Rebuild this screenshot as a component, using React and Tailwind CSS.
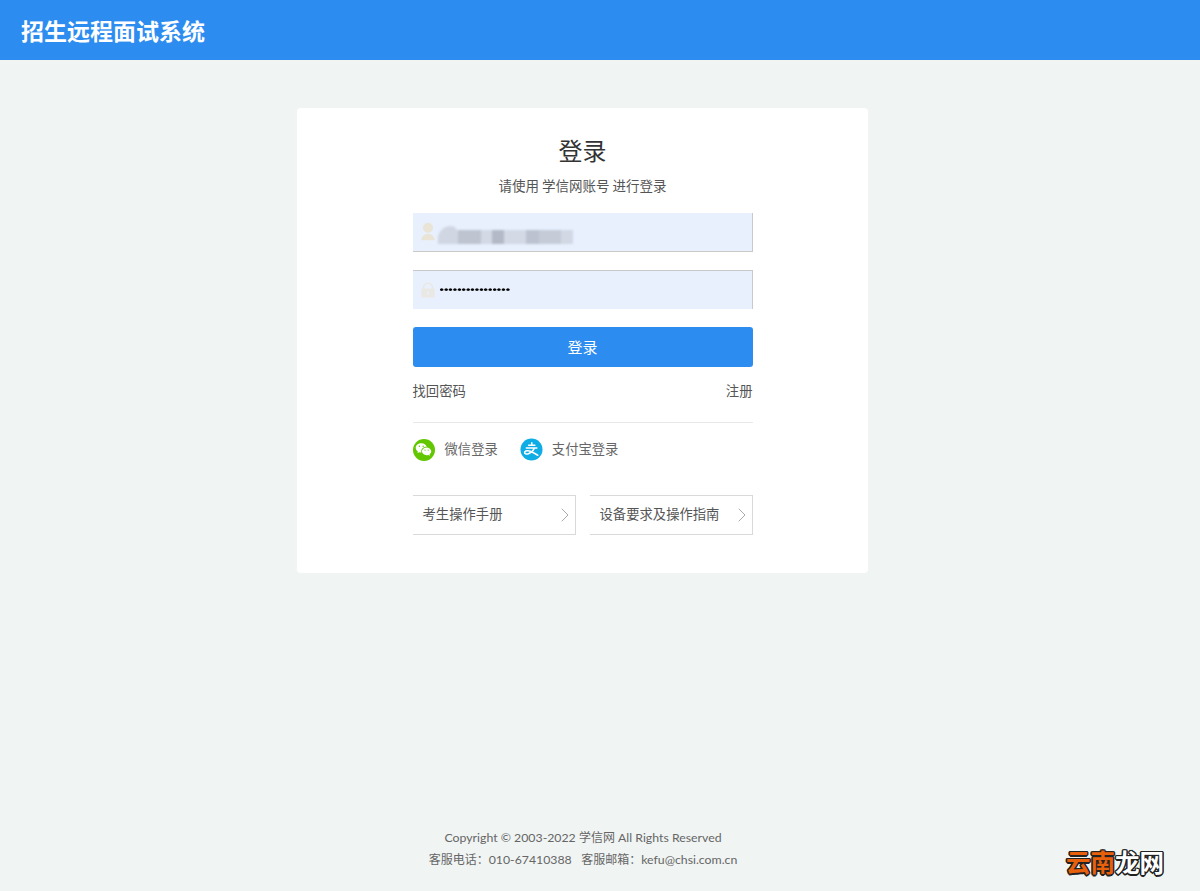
import { RiUserFill, RiLockFill, RiWechatFill } from 'react-icons/ri'
import { ChevronRight } from 'lucide-react'

function AlipayMark() {
  return (
    <svg viewBox="0 0 24 24" className="w-[23px] h-[23px]">
      <circle cx="12" cy="12" r="11.5" fill="#0fade6" />
      <path d="M9 7.6h6.5M12.3 5v2.6M6.6 10.400h11M15 10.600c-1.400 2.900-3.800 5.200-6.800 6-1.900.5-3.400-.1-3.400-1.400 0-1.500 2-2.300 4-1.800 3.200.7 6.400 2.600 9.700 4.600" fill="none" stroke="#fff" strokeWidth="1.6" strokeLinecap="round" />
    </svg>
  )
}

function GuideLink({ text }) {
  return (
    <a className="w-[163px] h-10 flex items-center justify-between pl-[10px] border-y border-r border-[#d9d9d9] text-[13.33px] text-[#555]">
      <span className="pb-[2px]">{text}</span>
      <ChevronRight size={24} strokeWidth={1} className="text-[#aaa] -mr-[2px]" />
    </a>
  )
}

export default function App() {
  return (
    <div className="relative min-h-screen flex flex-col bg-[#f0f4f3] font-['Noto_Sans_CJK_SC','Noto_Sans',sans-serif]">
      <header className="h-[60px] bg-[#2d8cf0] flex items-center px-[21px]">
        <h1 className="text-[23px] font-bold text-white">招生远程面试系统</h1>
      </header>

      <main className="flex-1 flex flex-col">
        <div className="w-[571px] ml-[297px] mt-12 h-[465px] bg-white rounded flex flex-col items-center pt-[26px]">
          <h2 className="text-[24px] leading-8 text-[#333]">登录</h2>
          <p className="mt-[9px] text-[13.5px] leading-5 text-[#555]">请使用 学信网账号 进行登录</p>

          <div className="w-[340px] mt-[18px]">
            {/* Username */}
            <div className="h-[39px] bg-[#e8f0fe] border-b border-r border-[#c9c9c9] flex items-center pl-[5px]">
              <RiUserFill size={20} className="shrink-0 text-[#e9e4d6]" />
              <div className="mt-[5px] flex items-end h-[18px] blur-[1px]">
                <div className="w-5 h-[18px] rounded-tl-[14px] rounded-tr-[8px] bg-[#d0d6e2]" />
                <div className="w-[23px] h-[14px] bg-[#bec4d0]" />
                <div className="w-[11px] h-[14px] bg-[#d3d9e5]" />
                <div className="w-[12px] h-[14px] bg-[#b3b9c6]" />
                <div className="w-[22px] h-[14px] bg-[#d3d9e5]" />
                <div className="w-[13px] h-[14px] bg-[#bcc2cf]" />
                <div className="w-[22px] h-[14px] bg-[#c5cbd7]" />
                <div className="w-[12px] h-[14px] bg-[#d2d8e4]" />
              </div>
            </div>

            {/* Password */}
            <div className="mt-[18px] h-[39px] bg-[#e8f0fe] border-t border-r border-[#c9c9c9] flex items-center pl-[6px]">
              <RiLockFill size={18} className="text-[#e9e8e4]" />
              <span className="ml-[3px] inline-block scale-y-75 font-['Liberation_Sans',sans-serif] text-[12.6px] leading-none font-bold text-black">••••••••••••••••</span>
            </div>

            <button className="mt-[18px] w-full h-10 pt-px rounded-[3px] bg-[#2d8cf0] text-white text-[15px]">登录</button>

            <div className="mt-[14px] flex justify-between text-[13.33px] leading-[20px] text-[#555]">
              <a>找回密码</a>
              <a>注册</a>
            </div>

            <div className="mt-[21px] border-t border-[#e8e8e8] pt-[15px] flex items-center text-[13.33px] text-[#666]">
              <span className="w-[22px] h-[22px] rounded-full bg-[#62c700] flex items-center justify-center">
                <RiWechatFill size={17} className="text-white" />
              </span>
              <span className="ml-[10px] pb-[2px]">微信登录</span>
              <span className="ml-[22px]"><AlipayMark /></span>
              <span className="ml-[9px] pb-[2px]">支付宝登录</span>
            </div>

            <div className="mt-[34px] flex justify-between">
              <GuideLink text="考生操作手册" />
              <GuideLink text="设备要求及操作指南" />
            </div>
          </div>
        </div>
      </main>

      <footer className="pb-[21px] flex flex-col items-center gap-[2px] font-['Lato','Noto_Sans_CJK_SC',sans-serif] text-[12.300px] leading-5 text-[#666] pr-[34px]">
        <p>Copyright © 2003-2022 <span className="text-[12px]">学信网</span> All Rights Reserved</p>
        <p><span className="text-[12px]">客服电话：</span>010-67410388&nbsp;&nbsp;&nbsp;<span className="text-[12px]">客服邮箱：</span>kefu@chsi.com.cn</p>
      </footer>

      {/* site watermark stamped over the page */}
      <div className="absolute left-[1066px] top-[847px] text-[24.5px] leading-[30px] font-bold text-white whitespace-nowrap [text-shadow:-1.5px_0_0_#222,1.5px_0_0_#222,0_-1.5px_0_#222,0_1.5px_0_#222,-1px_-1px_0_#222,1px_1px_0_#222,-1px_1px_0_#222,1px_-1px_0_#222]">
        <span className="text-[#e8600c]">云南</span>龙网
      </div>
    </div>
  )
}
